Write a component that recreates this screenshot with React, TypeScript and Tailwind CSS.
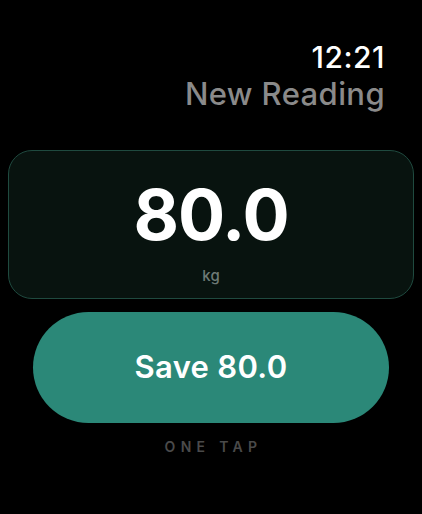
export default function App() {
  return (
    <div
      className="w-[422px] h-[514px] bg-black text-white flex flex-col px-2"
      style={{ fontFamily: "Inter, 'Noto Sans', sans-serif" }}
    >
      <div className="flex flex-col items-end pr-[29px] pt-[40px]">
        <div className="text-[30px] leading-[34px] font-medium tracking-[0.5px] text-white">12:21</div>
        <div className="text-[31px] leading-[38px] font-medium tracking-[0.4px] text-[#8a8a8a] mt-[1px]">New Reading</div>
      </div>
      <div className="mt-[37px] h-[149px] rounded-[24px] border-[1.5px] border-[#1f4a3f] bg-[#08130f] flex flex-col items-center">
        <div className="mt-[24px] text-[70px] leading-[80px] font-bold tracking-[-1px]">80.0</div>
        <div className="mt-[12px] text-[15px] leading-[18px] font-medium text-[#6e7a76]">kg</div>
      </div>
      <button className="mt-[13px] mx-[25px] h-[111px] rounded-full bg-[#2b8878] flex items-center justify-center">
        <span className="text-[31px] font-semibold tracking-[0.3px] text-white">Save 80.0</span>
      </button>
      <div className="mt-[13px] text-center text-[14px] font-semibold tracking-[0.38em] text-[#4a4a4a] pl-[5px]">
        ONE TAP
      </div>
    </div>
  );
}
